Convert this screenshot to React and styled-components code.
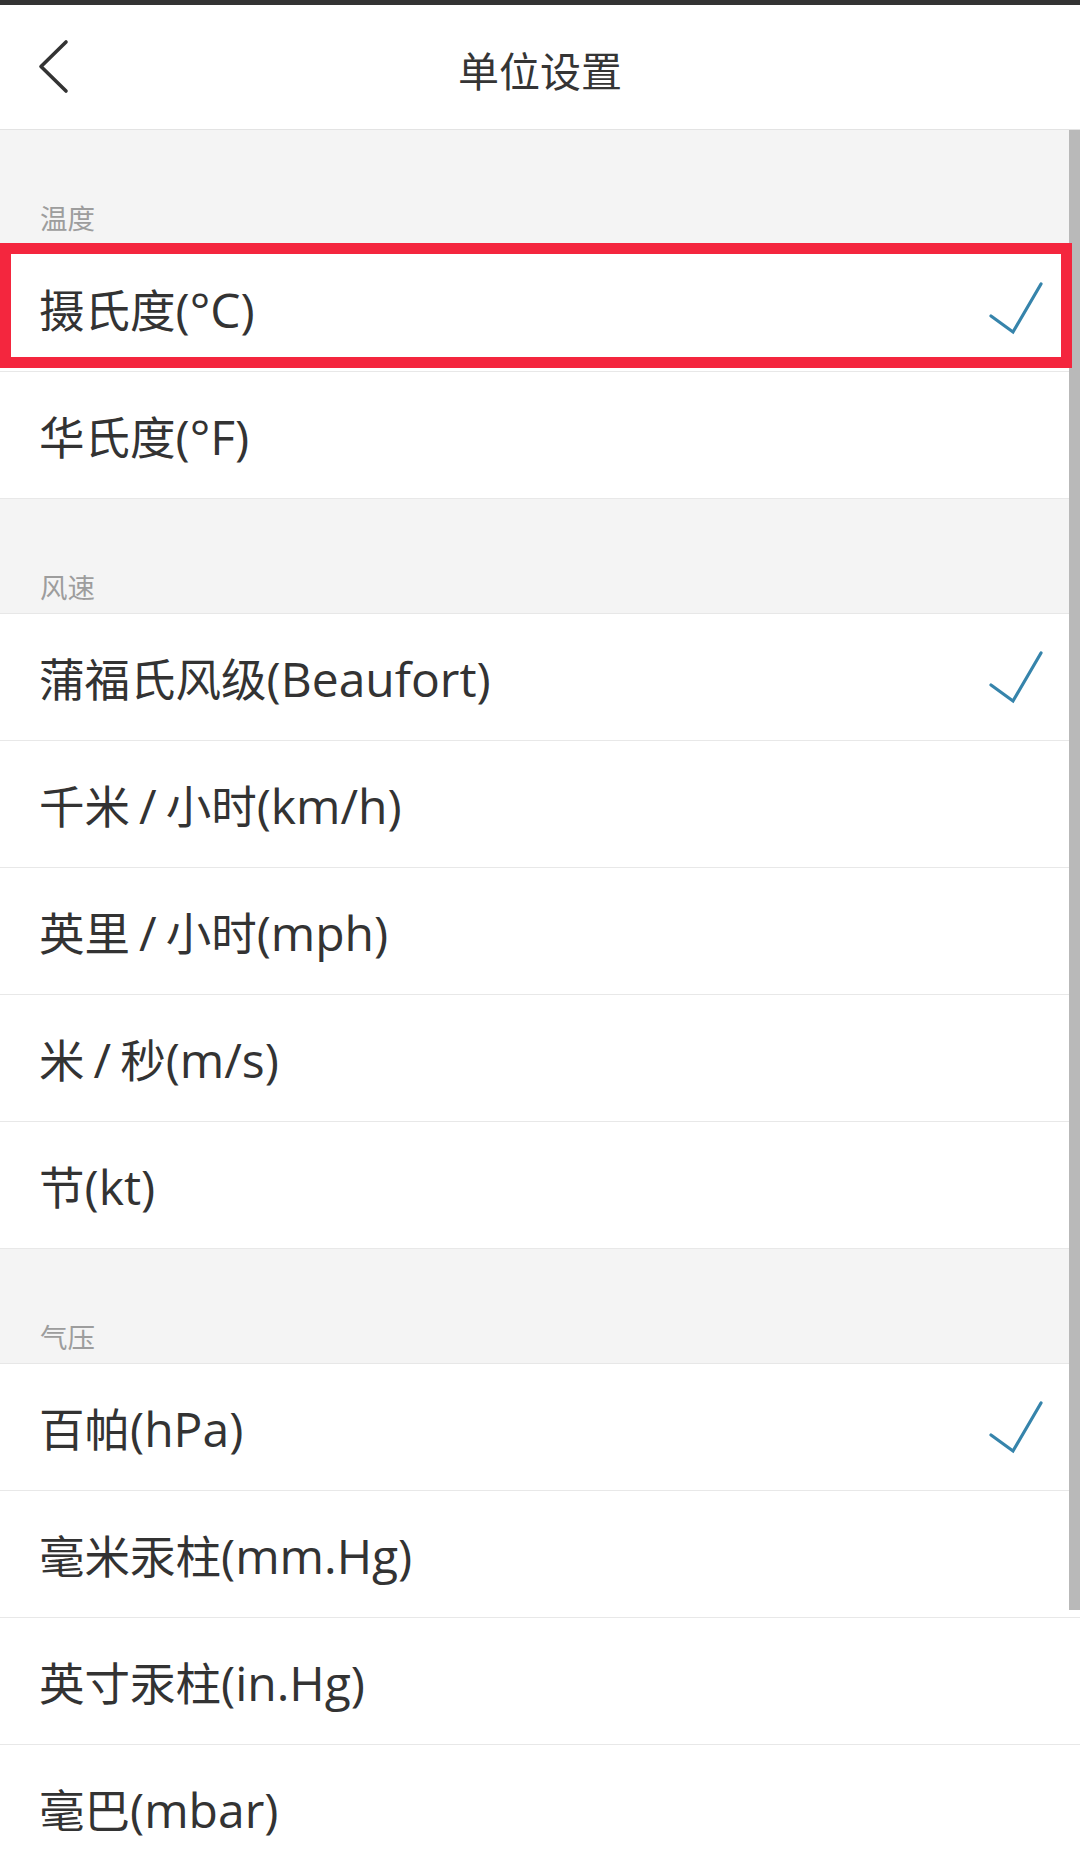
import React from "react";
import styled, { createGlobalStyle } from "styled-components";

const GlobalStyle = createGlobalStyle`
  html, body {
    margin: 0;
    padding: 0;
    overflow: hidden;
    background: #ffffff;
  }
  * { box-sizing: border-box; }
`;

const Page = styled.div`
  position: relative;
  width: 1080px;
  font-family: "Open Sans", "Noto Sans CJK SC", sans-serif;
  color: #333333;
`;

const StatusStrip = styled.div`
  height: 5px;
  background: #333333;
`;

const Header = styled.header`
  height: 125px;
  display: grid;
  grid-template-columns: 140px 1fr 140px;
  align-items: center;
  background: #ffffff;
  border-bottom: 1px solid #e3e3e3;
`;

const BackButton = styled.button`
  display: flex;
  align-items: center;
  justify-content: flex-start;
  padding: 0 0 0 36px;
  margin: 0;
  height: 100%;
  border: none;
  background: transparent;
`;

const Title = styled.h1`
  margin: 0;
  text-align: center;
  font-family: "Noto Sans CJK SC", sans-serif;
  font-weight: 400;
  font-size: 41px;
  line-height: 1;
  color: #353535;
  transform: translateY(2px);
`;

const SectionHeader = styled.div`
  height: 115px;
  display: flex;
  align-items: flex-end;
  padding: 0 0 9px 40px;
  background: #f4f4f4;
  border-bottom: 1px solid #e7e7e7;
`;

const SectionLabel = styled.span`
  font-family: "Noto Sans CJK SC", sans-serif;
  font-size: 27.5px;
  line-height: 36px;
  color: #9d9d9d;
`;

const Row = styled.div`
  position: relative;
  height: 127px;
  display: flex;
  align-items: center;
  justify-content: space-between;
  padding: 0 34px 0 39px;
  background: #ffffff;
  border-bottom: 1px solid #e8e8e8;
`;

const RowText = styled.span`
  line-height: 1;
  color: #333333;
  white-space: nowrap;
  transform: translateY(2px);
`;

const Cjk = styled.span`
  font-family: "Noto Sans CJK SC", sans-serif;
  font-size: 45.5px;
`;

const Slash = styled.span`
  font-family: "Open Sans", sans-serif;
  font-size: 48px;
  margin: 0 9px;
`;

const Latin = styled.span`
  font-family: "Open Sans", sans-serif;
  font-size: 48px;
`;

const Highlight = styled.div`
  position: absolute;
  left: 0;
  top: -2px;
  width: 1072px;
  height: 125px;
  border: 11px solid #f4263e;
  pointer-events: none;
  z-index: 2;
`;

const ScrollThumb = styled.div`
  position: absolute;
  right: 0;
  top: 130px;
  width: 11px;
  height: 1480px;
  background: #b9b9b9;
  z-index: 1;
`;

const Chevron = () => (
  <svg width="34" height="56" viewBox="0 0 34 56">
    <polyline
      points="30,3 5,27.5 30,52"
      fill="none"
      stroke="#333333"
      strokeWidth="3.6"
      strokeLinecap="round"
      strokeLinejoin="round"
    />
  </svg>
);

const Check = () => (
  <svg width="60" height="60" viewBox="0 0 60 60">
    <polyline
      points="5,38 27,54 55,6"
      fill="none"
      stroke="#3684ab"
      strokeWidth="3.2"
      strokeLinecap="round"
      strokeLinejoin="miter"
    />
  </svg>
);

const sections = [
  {
    label: "温度",
    items: [
      { cn: "摄氏度", en: "(°C)", checked: true, highlight: true },
      { cn: "华氏度", en: "(°F)" },
    ],
  },
  {
    label: "风速",
    items: [
      { cn: "蒲福氏风级", en: "(Beaufort)", checked: true },
      { cn: "千米/小时", en: "(km/h)" },
      { cn: "英里/小时", en: "(mph)" },
      { cn: "米/秒", en: "(m/s)" },
      { cn: "节", en: "(kt)" },
    ],
  },
  {
    label: "气压",
    items: [
      { cn: "百帕", en: "(hPa)", checked: true },
      { cn: "毫米汞柱", en: "(mm.Hg)" },
      { cn: "英寸汞柱", en: "(in.Hg)" },
      { cn: "毫巴", en: "(mbar)" },
    ],
  },
];

const CjkPart = ({ text }) => {
  const parts = text.split("/");
  return (
    <>
      {parts.map((p, i) => (
        <React.Fragment key={i}>
          {i > 0 && <Slash>/</Slash>}
          <Cjk>{p}</Cjk>
        </React.Fragment>
      ))}
    </>
  );
};

export default function App() {
  return (
    <>
      <GlobalStyle />
      <Page>
        <StatusStrip />
        <Header>
          <BackButton aria-label="返回">
            <Chevron />
          </BackButton>
          <Title>单位设置</Title>
          <div />
        </Header>
        {sections.map((s) => (
          <section key={s.label}>
            <SectionHeader>
              <SectionLabel>{s.label}</SectionLabel>
            </SectionHeader>
            {s.items.map((it) => (
              <Row key={it.cn}>
                <RowText>
                  <CjkPart text={it.cn} />
                  <Latin>{it.en}</Latin>
                </RowText>
                {it.checked && <Check />}
                {it.highlight && <Highlight />}
              </Row>
            ))}
          </section>
        ))}
        <ScrollThumb />
      </Page>
    </>
  );
}
